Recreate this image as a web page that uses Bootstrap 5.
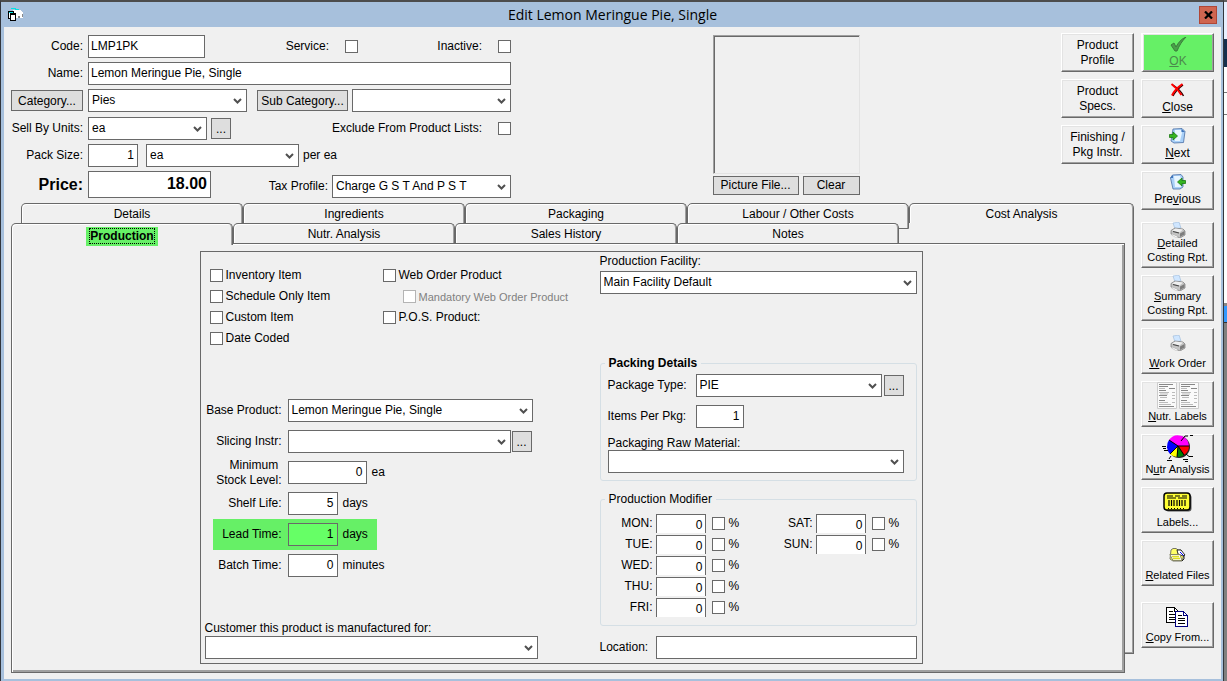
<!DOCTYPE html>
<html lang="en">
<head>
<meta charset="utf-8">
<meta name="viewport" content="width=device-width, initial-scale=1">
<title>Edit Lemon Meringue Pie, Single</title>
<link href="https://cdn.jsdelivr.net/npm/bootstrap@5.3.0/dist/css/bootstrap.min.css" rel="stylesheet">
<script src="https://cdn.jsdelivr.net/npm/bootstrap@5.3.0/dist/js/bootstrap.bundle.min.js"></script>
<style>
:root { --face:#f0f0f0; --line:#696969; --mid:#a0a0a0; --hi:#66f066; }
body { font-family:"Liberation Sans",Arial,sans-serif; font-size:12px; line-height:15px; color:#000;
  background:linear-gradient(#606060 0 2px,#e8f0ff 2px 39px,#16304d 39px 67px,#fff 67px 92px,#777 92px 93px,#fff 93px 114px,#777 114px 115px,#fff 115px 303px,#888 303px 306px,#3399ff 306px 322px,#333 322px 323px,#808080 323px); }
.win { min-height:100vh; margin-right:3px; border:1px solid #33363c; border-top:2px solid #4c4c4c; border-bottom:0; background:#a7c0dc; padding:0 2px 2px 3px; }
.titlebar { height:25px; }
.titlebar h1 { font:14px/26px "Open Sans","Noto Sans",sans-serif; }
.win-x { width:18px; height:18px; background:#cf6550; border:1px solid #b04636; }
.client { background:var(--face); padding:6px 7px 6px 7px; }
svg { display:block; }

/* controls */
.win .form-control,.win .form-select { height:23px; min-height:0; border:1px solid var(--line); border-radius:0; font-size:12px; line-height:15px; color:#000; background-color:#fff; padding:2px 3px 4px 2px; width:100%; }
.win .form-select { padding:3px 18px 3px 3px; background-size:9px 6px; background-position:right 4px center; background-repeat:no-repeat;
  background-image:url("data:image/svg+xml,%3Csvg xmlns='http://www.w3.org/2000/svg' viewBox='0 0 9 6'%3E%3Cpath d='M1 1l3.5 3.5L8 1' fill='none' stroke='%23505050' stroke-width='2'/%3E%3C/svg%3E"); }
.win .form-control.num { text-align:right; }
.win .form-check-input { width:13px; height:13px; margin:0; float:none; border:1px solid var(--line); border-radius:0; flex:none; background-color:#fff; }
.win .form-check-input:disabled { opacity:1; border-color:#b4b4b4; }
.w50 { flex:0 0 50px; } .w80 { flex:0 0 79px; } .w117 { flex:0 0 117px; } .w119 { flex:0 0 119px; } .w123 { flex:0 0 123px; }
.w159 { flex:0 0 159px; } .w153 { flex:0 0 153px; } .w179 { flex:0 0 179px; }
.w91 { width:91px; } .w57 { width:57px; } .w48 { width:48px; } .w186 { width:186px; } .w245 { width:245px; } .w223 { width:223px; }
.gap-5p { gap:5px; }
.gap-7p { gap:7px; }
.flatbtn { background:#dedede; border:1px solid var(--line); height:21px; padding:0 2px; line-height:18px; color:#000; flex:none; white-space:nowrap; }
.dots { width:20px; padding:0; }
.bevel { background:var(--face); border:1px solid; border-color:#fff var(--line) var(--line) #fff; box-shadow:inset -1px -1px var(--mid),inset 1px 1px #e3e3e3; color:#000; padding:0 0 2px; display:flex; flex-direction:column; align-items:center; justify-content:flex-end; width:73px; height:39px; white-space:nowrap; }
.bevel .ico { flex:1 1 0; min-height:0; display:flex; align-items:center; justify-content:center; gap:2px; }
.bevel .ico svg { flex:none; }
.bevel.tall { height:46px; font-size:11px; line-height:14px; padding-bottom:3px; }
.bevel.plain { justify-content:center; padding:0; }
.bevel:disabled { background:var(--hi); color:#4c8a4c; border-left:2px solid #fff; }

/* product header form */
.topform { width:500px; padding-top:2px; padding-bottom:5px; }
.topform .lab { margin-right:5px; }
.lab { flex:0 0 72px; text-align:right; white-space:nowrap; }
.price { font-size:16px; font-weight:bold; }
.win .form-control.price { height:27px; font-size:16px; line-height:20px; }
.picbox { width:147px; padding-top:2px; }
.pic { height:139px; margin-bottom:2px; border:1px solid; border-color:var(--mid) #e3e3e3 #e3e3e3 var(--mid); box-shadow:inset 1px 1px var(--line); }
.picbox .flatbtn { height:19px; line-height:17px; }

/* tabs */
.tabrow { height:20px; }
.tabrow button { flex:0 0 calc((100% - var(--in)) / 5); height:20px; padding:0; background:var(--face); color:#000; line-height:20px; border:1px solid var(--line); border-bottom:0; border-radius:5px 5px 0 0; box-shadow:inset 1px 1px #fff,inset -1px 0 var(--mid); }
.tabrow.back { --in:3px; margin-left:10px; }
.tabrow.back button:last-child { flex-grow:1; }
.tabrow.front { --in:4px; position:relative; }
.tabrow .tall-tab { height:26px; padding-bottom:6px; border-bottom:1px solid var(--line); }
.tabrow button.active { height:22px; padding-top:2px; margin-bottom:-2px; position:relative; z-index:1; font-weight:bold; }
.tabrow .active span { display:inline-block; background:var(--hi); padding:1px 4px 0; height:19px; line-height:17px; }
.tabrow .active i { font-style:normal; outline:1px dotted #000; display:inline-block; line-height:14px; }
.stack { display:grid; }
.stack > * { grid-area:1/1; }
.backsheet { margin-bottom:19px; border-right:1px solid var(--line); border-bottom:1px solid var(--line); box-shadow:inset -1px -1px var(--mid); }
.frontwrap { margin-right:9px; }
.page { background:var(--face); border:1px solid var(--line); box-shadow:inset 1px 1px #fff,inset -2px -2px var(--mid); padding:7px 14px 8px 0; }
.panel { width:723px; max-width:100%; border:1px solid var(--line); padding:2px 5px 4px 4px; display:grid; grid-template-columns:1fr 317px; }
.checks { padding:11px 0 46px 5px; display:grid; grid-template-columns:173px 1fr; grid-auto-rows:21px; align-items:center; }
.chk { display:flex; align-items:center; gap:3px; white-space:nowrap; }
.minor { font-size:11px; line-height:14px; color:#808080; padding-left:20px; }
.line { display:flex; align-items:center; height:31px; gap:5px; }
.line .lab { flex-basis:78px; padding-right:1px; }
.line .dots { margin-left:-4px; }
.lead-hi { background:var(--hi); margin-left:8px; width:164px; }
.lead-hi .lab { flex-basis:70px; }
.win .lead-hi .form-control { background:#66ff66; }
.cust { width:333px; }
fieldset { border:1px solid #d5dfe5; border-radius:3px; }
fieldset legend { float:none; width:auto; margin:0 0 0 4px; padding:0 4px; font-size:12px; line-height:15px; }
.faclab { padding-bottom:2px; }
.packing { margin-top:62px; padding:0 0 7px; }
.packbody { padding:3px 12px 0 7px; }
.packbody .dots { margin-left:2px; }
.packbody .rawlab { line-height:14px; }
.plab { width:88px; }
.modifier { margin-top:11px; }
.loclab { flex:0 0 56px; }
.days { display:grid; grid-template-columns:160px 1fr; grid-template-rows:repeat(5,19px); grid-auto-flow:column; row-gap:2px; padding:7px 0 8px; }
.day { display:flex; align-items:center; }
.day > label:first-child { width:52px; text-align:right; margin-right:3px; }
.win .day .form-control { height:19px; width:50px; border-bottom:0; padding:2px 2px 0; margin-right:6px; }
.day .form-check-input + label { margin-left:4px; }

/* command column */
.side { margin-left:7px; }
.reports { margin-top:5px; }
.copybtn { margin-top:9px; }
</style>
</head>
<body>
<svg width="0" height="0" class="position-absolute" aria-hidden="true">
  <symbol id="printer" viewBox="0 0 16 16">
    <path d="M3 1l6-1 2 6-6 1z" fill="#cfe6ff" stroke="#9bb8d8" stroke-width=".6"/>
    <path d="M1 8.500L5 6l8 1 2 2v4l-5 3-9-4z" fill="#c4c4c4" stroke="#777" stroke-width=".7"/>
    <path d="M2 8.500L5.500 6.500l7.500 1-3.500 3z" fill="#efefef"/><path d="M10 11.500V15l4.500-2.500V9z" fill="#7d7d7d"/><path d="M3 9.500l6 1.500" stroke="#444" stroke-width="1.200"/>
    <path d="M2 12l6 2.500L6 15.500 1.500 13z" fill="#fff" stroke="#aaa" stroke-width=".5"/>
  </symbol>
  <symbol id="sheet" viewBox="0 0 20 27">
    <path fill="#fafafa" stroke="#ccc" d="M.5.5h19v26H.5z"/>
    <path stroke="#888" d="M2 2.500h14M2 4.500h9M12 6.500h6M2 8.500h7M2 13.500h8M2 18.500h6M2 24.500h15"/>
    <path stroke="#bbb" d="M2 6.500h6M2 10.500h10M15 10.500h3M3 12h8M15 13.500h3M3 15.500h7M15 16.500h3M2 20.500h9M15 20.500h3M2 22.500h12"/>
  </symbol>
</svg>

<div class="win d-flex flex-column">
  <header class="titlebar d-flex align-items-center pe-1">
    <svg width="18" height="14" viewBox="0 0 18 14" shape-rendering="crispEdges" class="ms-1">
      <path fill="#fff" d="M5 2h8l2 3v5H7z"/><path fill="#00e5e5" d="M3 0h5v1H3zM7 1h4v1H7z"/><path fill="#888" d="M10 8h2v2h-2zM14 6h1v3h-1z"/>
      <path fill="#fff" stroke="#000" d="M.5 3.500h5v7h-5z"/><path fill="#fff" stroke="#000" d="M2.500 5.500h5v7h-5z"/><path fill="#000" d="M2 5h6v2H2zM0 3h6v1H0z"/><path fill="#00e5e5" d="M1 4h4v1H1z"/>
    </svg>
    <h1 class="flex-grow-1 text-center m-0">Edit Lemon Meringue Pie, Single</h1>
    <button class="win-x p-0 d-flex align-items-center justify-content-center" aria-label="Close window">
      <svg width="9" height="8" viewBox="0 0 9 8"><path d="M1 .5l7 7M8 .5l-7 7" stroke="#000" stroke-width="2.200"/></svg>
    </button>
  </header>

  <div class="client d-flex flex-grow-1">
    <main class="flex-grow-1 d-flex flex-column">
      <div class="d-flex justify-content-between align-items-start">
        <form class="topform d-flex flex-column gap-5p">
          <div class="d-flex flex-column gap-1">
            <div class="d-flex align-items-center">
              <label class="lab" for="code">Code:</label>
              <div class="w117"><input id="code" class="form-control" value="LMP1PK"></div>
              <div class="d-flex align-items-center justify-content-end w153 gap-3"><label for="service">Service:</label><input id="service" type="checkbox" class="form-check-input"></div>
              <div class="d-flex align-items-center justify-content-end w153 gap-3"><label for="inactive">Inactive:</label><input id="inactive" type="checkbox" class="form-check-input"></div>
            </div>
            <div class="d-flex align-items-center">
              <label class="lab" for="name">Name:</label>
              <input id="name" class="form-control" value="Lemon Meringue Pie, Single">
            </div>
            <div class="d-flex align-items-center">
              <button type="button" class="flatbtn lab text-center">Category...</button>
              <div class="w159"><select class="form-select" aria-label="Category"><option>Pies</option></select></div>
              <button type="button" class="flatbtn ms-auto me-1 w91">Sub Category...</button>
              <div class="w159"><select class="form-select" aria-label="Sub category"><option></option></select></div>
            </div>
          </div>
          <div class="d-flex flex-column gap-1">
            <div class="d-flex align-items-center">
              <label class="lab" for="sell">Sell By Units:</label>
              <div class="w119"><select id="sell" class="form-select"><option>ea</option></select></div>
              <button type="button" class="flatbtn dots ms-1">...</button>
              <div class="d-flex align-items-center ms-auto gap-3"><label for="excl">Exclude From Product Lists:</label><input id="excl" type="checkbox" class="form-check-input"></div>
            </div>
            <div class="d-flex align-items-center">
              <label class="lab" for="pack">Pack Size:</label>
              <div class="w50"><input id="pack" class="form-control num" value="1"></div>
              <div class="w153 ms-2 me-1"><select class="form-select" aria-label="Pack unit"><option>ea</option></select></div>
              <span>per ea</span>
            </div>
            <div class="d-flex align-items-center">
              <label class="lab price" for="price">Price:</label>
              <div class="w123"><input id="price" class="form-control num price" value="18.00"></div>
              <label class="ms-auto me-1 mt-1" for="tax">Tax Profile:</label>
              <div class="w179 mt-1"><select id="tax" class="form-select"><option>Charge G S T And P S T</option></select></div>
            </div>
          </div>
        </form>
        <div class="picbox">
          <div class="pic"></div>
          <div class="d-flex gap-1"><button class="flatbtn flex-grow-1">Picture File...</button><button class="flatbtn w57">Clear</button></div>
        </div>
        <div class="d-grid gap-7p">
          <button class="bevel plain">Product<br>Profile</button>
          <button class="bevel plain">Product<br>Specs.</button>
          <button class="bevel plain">Finishing /<br>Pkg Instr.</button>
        </div>
      </div>

      <div class="tabrow back d-flex align-items-start">
        <button>Details</button><button>Ingredients</button><button>Packaging</button><button class="tall-tab">Labour / Other Costs</button><button>Cost Analysis</button>
      </div>
      <div class="stack flex-grow-1">
        <div class="backsheet"></div>
        <div class="frontwrap d-flex flex-column">
          <div class="tabrow front d-flex align-items-start">
            <button class="active"><span><i>Production</i></span></button><button>Nutr. Analysis</button><button>Sales History</button><button>Notes</button>
          </div>
          <div class="page flex-grow-1 d-flex">
            <div class="panel mx-auto">
              <div class="d-flex flex-column">
                <div class="checks">
                  <div class="chk"><input class="form-check-input" type="checkbox" id="c1"><label for="c1">Inventory Item</label></div>
                  <div class="chk"><input class="form-check-input" type="checkbox" id="c2"><label for="c2">Web Order Product</label></div>
                  <div class="chk"><input class="form-check-input" type="checkbox" id="c3"><label for="c3">Schedule Only Item</label></div>
                  <div class="chk minor"><input class="form-check-input" type="checkbox" id="c4" disabled><label for="c4">Mandatory Web Order Product</label></div>
                  <div class="chk"><input class="form-check-input" type="checkbox" id="c5"><label for="c5">Custom Item</label></div>
                  <div class="chk"><input class="form-check-input" type="checkbox" id="c6"><label for="c6">P.O.S. Product:</label></div>
                  <div class="chk"><input class="form-check-input" type="checkbox" id="c7"><label for="c7">Date Coded</label></div>
                </div>
                <div class="line"><label class="lab" for="base">Base Product:</label><div class="w245"><select id="base" class="form-select"><option>Lemon Meringue Pie, Single</option></select></div></div>
                <div class="line"><label class="lab" for="slice">Slicing Instr:</label><div class="w223"><select id="slice" class="form-select"><option></option></select></div><button class="flatbtn dots">...</button></div>
                <div class="line"><label class="lab" for="minst">Minimum&nbsp;<br>Stock Level:</label><div class="w80"><input id="minst" class="form-control num" value="0"></div>ea</div>
                <div class="line"><label class="lab" for="shelf">Shelf Life:</label><div class="w50"><input id="shelf" class="form-control num" value="5"></div>days</div>
                <div class="line lead-hi"><label class="lab" for="leadt">Lead Time:</label><div class="w50"><input id="leadt" class="form-control num" value="1"></div>days</div>
                <div class="line"><label class="lab" for="batch">Batch Time:</label><div class="w50"><input id="batch" class="form-control num" value="0"></div>minutes</div>
                <div class="mt-auto cust"><label for="cust" class="d-block">Customer this product is manufactured for:</label><select id="cust" class="form-select"><option></option></select></div>
              </div>
              <div class="d-flex flex-column">
                <label for="fac" class="faclab">Production Facility:</label>
                <select id="fac" class="form-select"><option>Main Facility Default</option></select>
                <fieldset class="packing">
                  <legend class="fw-bold">Packing Details</legend>
                  <div class="packbody">
                    <div class="d-flex align-items-center mb-2"><label class="plab" for="ptype">Package Type:</label><div class="w186"><select id="ptype" class="form-select"><option>PIE</option></select></div><button class="flatbtn dots">...</button></div>
                    <div class="d-flex align-items-center mb-2"><label class="plab" for="items">Items Per Pkg:</label><div class="w48"><input id="items" class="form-control num" value="1"></div></div>
                    <label for="raw" class="d-block rawlab">Packaging Raw Material:</label>
                    <select id="raw" class="form-select"><option></option></select>
                  </div>
                </fieldset>
                <fieldset class="modifier">
                  <legend>Production Modifier</legend>
                  <div class="days">
                    <div class="day"><label for="d1">MON:</label><input id="d1" class="form-control num" value="0"><input id="p1" class="form-check-input" type="checkbox"><label for="p1">%</label></div>
                    <div class="day"><label for="d2">TUE:</label><input id="d2" class="form-control num" value="0"><input id="p2" class="form-check-input" type="checkbox"><label for="p2">%</label></div>
                    <div class="day"><label for="d3">WED:</label><input id="d3" class="form-control num" value="0"><input id="p3" class="form-check-input" type="checkbox"><label for="p3">%</label></div>
                    <div class="day"><label for="d4">THU:</label><input id="d4" class="form-control num" value="0"><input id="p4" class="form-check-input" type="checkbox"><label for="p4">%</label></div>
                    <div class="day"><label for="d5">FRI:</label><input id="d5" class="form-control num" value="0"><input id="p5" class="form-check-input" type="checkbox"><label for="p5">%</label></div>
                    <div class="day"><label for="d6">SAT:</label><input id="d6" class="form-control num" value="0"><input id="p6" class="form-check-input" type="checkbox"><label for="p6">%</label></div>
                    <div class="day"><label for="d7">SUN:</label><input id="d7" class="form-control num" value="0"><input id="p7" class="form-check-input" type="checkbox"><label for="p7">%</label></div>
                  </div>
                </fieldset>
                <div class="d-flex align-items-center mt-auto"><label for="loc" class="loclab">Location:</label><input id="loc" class="form-control"></div>
              </div>
            </div>
          </div>
        </div>
      </div>
    </main>

    <aside class="side d-flex flex-column gap-7p">
      <button class="bevel" disabled><span class="ico"><svg width="17" height="15" viewBox="0 0 17 15"><path d="M1 8l3-2 2 4C8 6 11 2 16 0 12 4 9 9 7 14H5z" fill="#4aa04a" stroke="#3b7d3b"/></svg></span><span><u>O</u>K</span></button>
      <button class="bevel"><span class="ico"><svg width="15" height="14" viewBox="0 0 15 14"><path d="M3 2c3 2 8 6 10.500 11M13 2C9 5 5 9 3 13" fill="none" stroke="#300" stroke-width="1.500"/><path d="M1.500 1c4 3 7 6 10 11M12.500 1C8 4 4 8 2 12.500" fill="none" stroke="#f00" stroke-width="2"/></svg></span><span><u>C</u>lose</span></button>
      <button class="bevel"><span class="ico"><svg width="17" height="16" viewBox="0 0 17 16"><path d="M4 1l9-.5 3 3-1.500 11L5 15 2 13z" fill="#a9d0f8" stroke="#4a6fa5" stroke-width=".8"/><path d="M6 2h6l1 3-2 8H6z" fill="#e8f5ff"/><path d="M12.500 1v3H16z" fill="#3f74bb"/><path d="M.5 6.500H4V4l4.500 4L4 12V9.500H.5z" fill="#35b521" stroke="#1a7a10" stroke-width=".8"/></svg></span><span><u>N</u>ext</span></button>
      <button class="bevel"><span class="ico"><svg width="17" height="16" viewBox="0 0 17 16"><path d="M3.500 1L12 .5l2 2.500v10l-3 2H4L1.500 4z" fill="#a9d0f8" stroke="#4a6fa5" stroke-width=".8"/><path d="M5 2h6l1 3v8H6z" fill="#e8f5ff"/><path d="M4 1v3H1z" fill="#3f74bb"/><path d="M16.500 6.500H13V4L8.500 8l4.500 4V9.500h3.500z" fill="#35b521" stroke="#1a7a10" stroke-width=".8"/></svg></span><span>Pre<u>v</u>ious</span></button>
      <div class="d-flex flex-column gap-7p reports">
        <button class="bevel tall"><span class="ico"><svg width="16" height="16"><use href="#printer"/></svg></span><span><u>D</u>etailed<br>Costing Rpt.</span></button>
        <button class="bevel tall"><span class="ico"><svg width="16" height="16"><use href="#printer"/></svg></span><span><u>S</u>ummary<br>Costing Rpt.</span></button>
        <button class="bevel tall"><span class="ico"><svg width="16" height="16"><use href="#printer"/></svg></span><span><u>W</u>ork Order</span></button>
        <button class="bevel tall"><span class="ico"><svg width="20" height="27"><use href="#sheet"/></svg><svg width="20" height="27"><use href="#sheet"/></svg></span><span><u>N</u>utr. Labels</span></button>
        <button class="bevel tall"><span class="ico"><svg width="32" height="27" viewBox="0 0 32 27">
          <circle cx="17" cy="12" r="11" fill="#222"/>
          <g transform="translate(16 11)"><path d="M0 0L-9 -6A11 11 0 0 1 11 0z" fill="#f0f"/><path d="M0 0L-9 -6A11 11 0 0 0 -8 8z" fill="#00f"/><path d="M0 0L-8 8A11 11 0 0 0 -1 11z" fill="#ff0"/><path d="M0 0L-1 11A11 11 0 0 0 6 9z" fill="#008000"/><path d="M0 0L6 9A11 11 0 0 0 11 0z" fill="#f00"/><path d="M-9-6L0 0H11M0 0L-8 8M0 0l-1 11M0 0l6 9" stroke="#000" fill="none"/></g>
          <path d="M19 6l4-5h3M28 .5h3M0 11.500h4M1 13.500h3M2 15.500h4M9 21l-2 3M5 25.500h5M24 19l3 2.500h4M21 24.500h5M23 26.500h3" stroke="#000" fill="none"/></svg></span><span>N<u>u</u>tr Analysis</span></button>
        <button class="bevel tall"><span class="ico"><svg width="30" height="20" viewBox="0 0 30 20"><rect x="2.500" y="2.500" width="26" height="17" rx="3" fill="#555"/><rect x="1" y="1" width="26" height="17" rx="3" fill="#ff3" stroke="#000" stroke-width="1.500"/><path d="M4 4h6M12 4h5M19 4h5M4 6h9M15 6h9" stroke="#000" stroke-width="1.200"/><path d="M6 8v6M8.500 8v6M11 8v6M14 8v6M16.500 8v6M19 8v6M22 8v6" stroke="#000" stroke-width="1.200"/><path d="M5 16.500h18" stroke="#000" stroke-dasharray="1 2"/></svg></span><span>Labels...</span></button>
        <button class="bevel tall"><span class="ico"><svg width="17" height="14" viewBox="0 0 17 14"><path d="M2 2l2-1.500h3L9 2h3l3 5-2 6H4L1 11z" fill="#ff6" stroke="#776"/><path d="M8 2h4l4 5-2 1-5-2z" fill="#fff" stroke="#000" stroke-width=".8"/><path d="M.8 6.500H11l2 6H4z" fill="#ffe" stroke="#886"/><path d="M3 8.500h7M4 10.500h7" stroke="#dd2" stroke-width="1.500"/><path d="M11 4l4 4" stroke="#00f"/><path d="M15 7v4l-2 2" stroke="#222" fill="none"/></svg></span><span><u>R</u>elated Files</span></button>
      </div>
      <button class="bevel tall copybtn"><span class="ico"><svg width="23" height="20" viewBox="0 0 23 20" shape-rendering="crispEdges"><path d="M.5.5h8l4 4v11H.5z" fill="#fff" stroke="#000"/><path d="M8.500.5v4h4M3 4.500h4M3 7.500h6M3 10.500h6M3 12.500h6" fill="none" stroke="#000"/><path d="M9.500 4.500h8l4 4v11h-12z" fill="#fff" stroke="#000080"/><path d="M17.500 4.500v4h4" fill="none" stroke="#000080"/><path d="M12 8.500h4M12 11.500h7M12 13.500h7M12 16.500h7" stroke="#000"/></svg></span><span><u>C</u>opy From...</span></button>
    </aside>
  </div>
</div>
</body>
</html>
